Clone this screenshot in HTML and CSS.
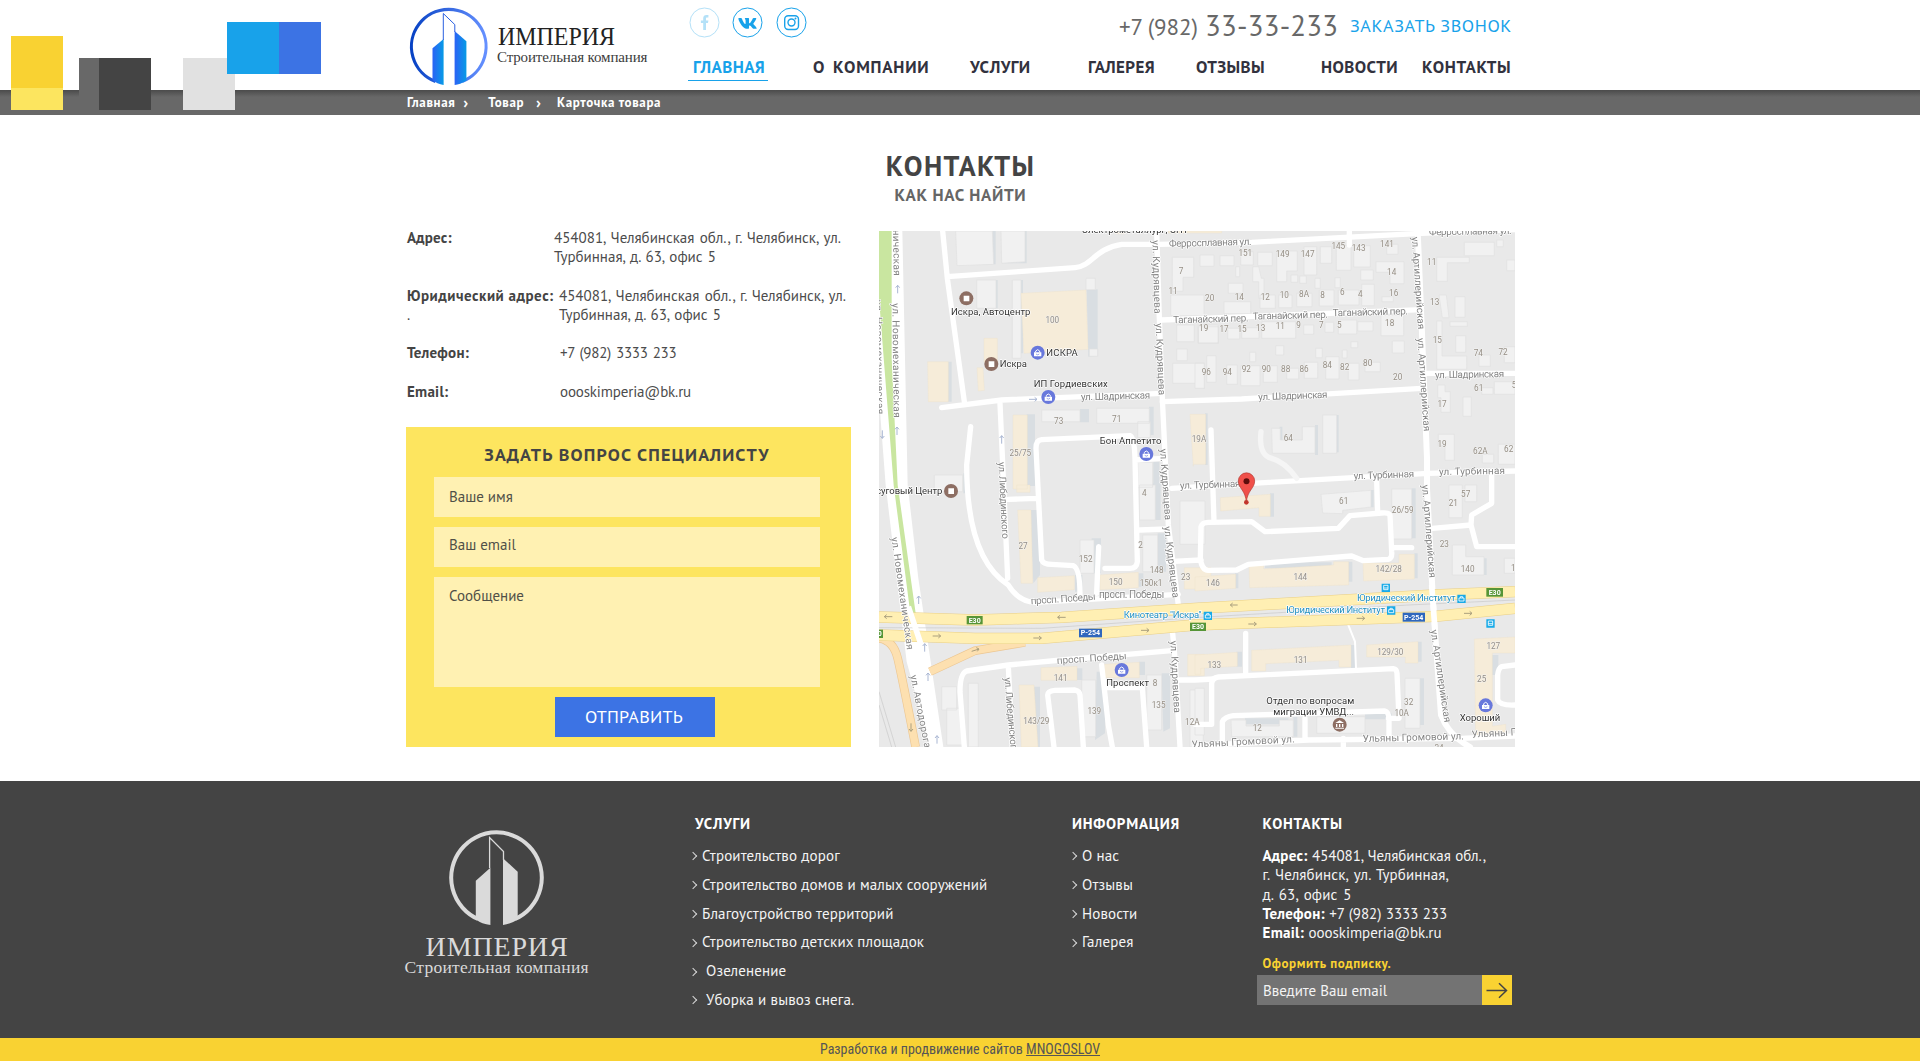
FILE: index.html
```html
<!DOCTYPE html>
<html lang="ru">
<head>
<meta charset="utf-8">
<title>Империя — Контакты</title>
<link rel="stylesheet" href="styles.css">
</head>
<body>
<div class="decor" aria-hidden="true">
  <i class="sq yellow"></i><i class="sq lemon"></i><i class="sq grey"></i><i class="sq dark"></i><i class="sq silver"></i><i class="sq sky"></i><i class="sq royal"></i>
</div>

<header class="header">
  <div class="wrap header-in">
    <a class="logo" href="#">
      <svg width="250" height="90" viewBox="407 0 250 90">
        <defs>
          <linearGradient id="ring"><stop offset="0" stop-color="#0742c4"/><stop offset="1" stop-color="#6590ff"/></linearGradient>
          <linearGradient id="tower"><stop offset="0" stop-color="#2b62f5"/><stop offset="1" stop-color="#069be6"/></linearGradient>
        </defs>
        <path d="M435.5 81.5A37.300 37.300 0 1 1 462 81.5" fill="none" stroke="url(#ring)" stroke-width="3.100"/>
        <path d="M432.5 48.300 443.600 39V85Q437 84 432.500 80Z" fill="url(#tower)"/>
        <path d="M454.600 31 466.400 41.300V80.500Q460 84.500 454.600 85Z" fill="url(#tower)"/>
        <path d="M443.300 40V13.500L454.800 24.600V32" fill="none" stroke="#2a5fe0"/>
        <text class="brand" x="498" y="44.500" font-size="25" textLength="117" lengthAdjust="spacingAndGlyphs" fill="#222">ИМПЕРИЯ</text>
        <text class="brand" x="497" y="62" font-size="15" textLength="150.500" fill="#3c3c3c">Строительная компания</text>
      </svg>
    </a>
    <div class="header-main">
      <div class="topline">
        <div class="social">
          <svg class="faded" width="31" height="31" viewBox="-15.500 -15.500 31 31"><circle r="14.500"/><path class="solid" d="M-1.300 7.500V.6H-3.600V-2H-1.300V-4.200C-1.300-6.500-.1-7.600 2-7.600H3.900V-5H2.600C1.700-5 1.500-4.600 1.500-3.800V-2H3.900L3.500.6H1.500V7.500Z"/></svg>
          <svg width="31" height="31" viewBox="-15.500 -15.500 31 31"><circle r="14.500"/><path class="solid" transform="translate(-9.800 -7.800) scale(.034)" d="M545 117.700c3.700-12.500 0-21.700-17.800-21.700h-58.900c-15 0-21.900 7.900-25.600 16.700 0 0-30 73.100-72.400 120.500-13.700 13.700-20 18.100-27.500 18.100-3.700 0-9.400-4.400-9.400-16.900V117.700c0-15-4.200-21.700-16.600-21.700h-92.600c-9.400 0-15 7-15 13.500 0 14.200 21.200 17.500 23.400 57.500v86.800c0 19-3.400 22.500-10.900 22.500-20 0-68.600-73.400-97.400-157.400-5.800-16.300-11.500-22.900-26.600-22.900H38.800c-16.800 0-20.200 7.900-20.200 16.700 0 15.600 20 93.100 93.100 195.500C160.400 378.100 229 416 291.400 416c37.500 0 42.100-8.400 42.100-22.900 0-66.800-3.400-73.100 15.400-73.100 8.700 0 23.700 4.400 58.700 38.100 40 40 46.600 57.900 69 57.900h58.900c16.800 0 25.300-8.400 20.400-25-11.200-34.900-86.900-106.700-90.300-111.500-8.700-11.200-6.200-16.200 0-26.200.1-.1 72-101.300 79.400-135.600z"/></svg>
          <svg width="31" height="31" viewBox="-15.500 -15.500 31 31"><circle r="14.500"/><rect x="-6.800" y="-6.800" width="13.800" height="13.800" rx="3.500"/><circle class="lens" r="3.500"/><circle class="solid" cx="4" cy="-4" r="1"/></svg>
        </div>
        <div class="phone"><span>+7 (982)</span><b>33-33-233</b></div>
        <a class="callback" href="#">ЗАКАЗАТЬ ЗВОНОК</a>
      </div>
      <nav class="nav">
        <a class="active" href="#">ГЛАВНАЯ</a><a class="wide" href="#">О КОМПАНИИ</a><a href="#">УСЛУГИ</a><a href="#">ГАЛЕРЕЯ</a><a href="#">ОТЗЫВЫ</a><a href="#">НОВОСТИ</a><a class="last" href="#">КОНТАКТЫ</a>
      </nav>
    </div>
  </div>
</header>

<div class="crumbs"><div class="wrap crumbs-in"><a>Главная</a><i>›</i><a>Товар</a><i class="second">›</i><a>Карточка товара</a></div></div>

<main class="wrap">
  <h1>КОНТАКТЫ</h1>
  <p class="subtitle">КАК НАС НАЙТИ</p>
  <div class="columns">
    <section class="left">
      <dl class="info">
        <div><dt>Адрес:</dt><dd class="near">454081, Челябинская обл., г. Челябинск, ул.<br>Турбинная, д. 63, офис 5</dd></div>
        <div><dt class="legal">Юридический адрес:<br><span>.</span></dt><dd>454081, Челябинская обл., г. Челябинск, ул.<br>Турбинная, д. 63, офис 5</dd></div>
        <div><dt>Телефон:</dt><dd class="far phone-no">+7 (982) 3333 233</dd></div>
        <div><dt>Email:</dt><dd class="far mail">oooskimperia@bk.ru</dd></div>
      </dl>
      <form class="ask">
        <h2>ЗАДАТЬ ВОПРОС СПЕЦИАЛИСТУ</h2>
        <div class="field">Ваше имя</div>
        <div class="field second">Ваш email</div>
        <div class="field area">Сообщение</div>
        <button type="button">ОТПРАВИТЬ</button>
      </form>
    </section>

    <svg class="map" width="636" height="516" viewBox="12 18 1908 1548">
      <rect x="12" y="18" width="1908" height="1548" fill="#e9e9e9"/>
      <!-- buildings -->
      <g class="shade">
        <path d="M352 18h10v100h-100v-6h90zM450 18h5v97h-70v-4h65zM360 165h8v85h-8zM438 165h6v220h-6zM635 195l33-2v200l-28 2zM218 410h12v120h-12zM455 568h25v215h-25zM615 552h27v40h-27zM822 545h14v85h-14zM265 745h8v60h-8zM465 855h30v195l-20 25zM600 1050h22v50h-22zM650 940h28v105h-28zM832 775h25v110h-25zM848 925h25v115h-25zM790 1045h15v40h-15zM470 1385h25v181h-25zM600 1330h22v35h-22zM665 1340h25v185l-30 20zM792 1310h18v40h-18zM860 1345h25v165l-20 10zM835 710h18v75h-18z"/>
        <path d="M990 565h8v155h-8zM1214 605h8v40h-8zM1320 600h9v90h-9zM1384 570h7v112h-7zM1185 805h12v70h-12zM1488 795h8v52h-8zM1610 790h12v150h-12zM1080 1045h10v45h-10zM1170 1012h200v18h-200zM1418 1010h14v60h-14zM1618 985h10v75h-10zM1085 1280h16v45h-16zM1428 1260h14v70h-14zM1628 1250h12v60h-12zM1635 1360h12v140h-12zM1255 1475h12v60h-12zM1110 1480h130v18h-130zM1470 1465h80v18h-80zM1825 1000h10v50h-10zM1850 1290h20v60h-20z"/>
      </g>
      <g class="house">
        <path d="M242 18h110l4 100-110 4zM378 18h72v92l-70 5zM305 165h58v85h-58zM412 165h26v235h-26zM633 160h28v34h-28zM643 372h25v22h-25zM500 555h115v35H500zM665 550h158v45H665zM788 590h38v48h-38zM178 750h85v50h-85zM615 945h42v100h-42zM793 780h48v105h-48zM803 930h45v110h-45zM788 712h45v75h-45zM915 828h75v130h-75zM200 1385h45v70h-45zM280 1375h30v191h-30zM215 1450h50v110h-50zM620 1365h42v170h-42zM815 1350h45v165h-45zM945 1395h40v171h-40z"/>
        <path d="M892 97h64v60h-32v42h-32zM975 90h42v34h-42zM887 210h100v62h-100zM905 300h53v50h-53zM905 372h32v35h-32zM893 415h95v75h-25v-15h-70zM970 300h60v54h-60zM1035 92h42v30h-42zM1097 80h38v40h-38zM1148 82h44v40h-44zM1205 78h62v60h-32v32h-30zM1287 65h38v85h-38zM1336 65h34v50h-34zM1384 62h44v74h-44zM1436 62h50v64h-50zM1535 58h34v30h-34zM1503 110h84v66h-42v-34h-42zM1060 175h44v30h-44zM1133 125h18l8 35h8v60h-16v-50h-18zM1047 230h80v36h-80zM1155 210h46v40h-46zM1211 210h40v38h-40zM1265 205h46v40h-46zM1333 195h44v48h-44zM1390 195h62v45h-62zM1460 178h38v64h-38zM1521 215h34v15h-34zM1457 135h38v30h-38zM1320 160h16v30h-16zM1380 158h16v30h-16zM1248 150h20v22h-20zM1274 153h20v22h-20zM1082 125h12v30h-12zM970 305h60v50h-60zM1058 310h36v32h-36zM1100 308h52v32h-52zM1160 290h102v50h-102zM1286 300h30v28h-30zM1350 292h26v30h-26zM1390 285h55v42h-55zM1448 290h46v28h-46zM1518 270h68v62h-68z"/>
        <path d="M995 392h28v80h-28zM960 415h28v75h-28zM1055 420h32v58h-32zM1097 422h58v60h-58zM1165 422h42v50h-42zM1235 430h36v32h-36zM1288 412h40v48h-40zM1352 395h40v67h-40zM1420 415h32v50h-32zM1470 412h46v28h-46zM1552 348h36v36h-36zM1124 382h18v28h-18zM1202 362h24v28h-24zM1322 370h20v28h-20zM1402 375h14v24h-14zM1428 350h20v18h-20zM1190 610h26v35h66v-40h38v80h-128zM1343 570h42v115h-42zM1685 97h98v16h-66v56h-32zM1768 52h90v40h-90zM1865 45h20v20h-20zM1895 105h25v32h-25zM1692 210h22l8 68h-20zM1740 215h30v62h-30zM1685 288h16v105h74v40h-90zM1742 332h30v50h-30zM1725 290h52v14h-52zM1812 390h34v34h-34zM1888 365h32v48h-32zM1858 470h62v38h-62zM1820 488h34v20h-34zM1688 480h22v20h16v62h-28v-44h-10zM1764 516h25v58h-25zM1690 628h48v78h-28v-44h-20zM1870 658h50v60h-50zM1822 688h34v26h-34z"/>
        <path d="M1338 808l150-12v50l-85 10v10l-60-2zM1550 792h60v150h-60zM1722 780h40v98h-40zM1770 780h35v50h-35zM1732 960h40v35h55v55h-95zM1888 1000h32v45h-32zM1590 1360h45v150h-45zM1068 1485h45v18h100v-18h42v50h-185zM1325 1475h145v50h-145zM960 1390h28v140h-28z"/>
      </g>
      <g class="cream">
        <path d="M438 205l195-10 6 178-192 12zM327 340h40v72h-40zM158 410h62v120h-60zM306 428h18l4 68-18 2zM414 570h43v222h-43zM945 568h47v150h-37v6zM428 855h40l5 220h-35zM488 1058l110-6v42l-110 8zM675 1050l115-8v46l-115 6zM928 1028h80v64h-80zM498 1328l108-4v42h-108zM432 1380h45l12 186h-50zM688 1318l105-6v46h-105zM938 1288h50v64h-50zM720 18h30v8h-30zM880 18h160v6h-160zM425 780h40v22h-40z"/>
        <path d="M1036 818l150-10v66h-34v-26l-115 10zM960 1056l122-8v42l-122 8zM1122 1018h44v14l210-12v-10h45v70l-297 8zM1464 1014h108v-26h46v74l-152 6zM960 1290l127-8v42l-110 6v18h-17zM1130 1276l298-16v66h-36v-20l-220 10v22h-42zM1475 1260l154-10v64h-38v-18h-116zM1798 1242l122-6v48h-68v220l40-6v36l-90 4z"/>
      </g>
      <!-- ring road with its green strip -->
      <path d="M12 520V250L48 18H82L98 780 130 1060 205 1566H165L95 1310 32 780Z" fill="#fff"/>
      <path d="M12 18H50V400L68 780 122 1165H106L56 780 34 500 12 220Z" fill="#c9e6a0"/>
      <path d="M12 1440 50 1566M12 1400 62 1566" class="rail"/>
      <!-- streets -->
      <g class="road">
        <path d="M203 18 217 160 268 530M217 155 600 128C650 124 660 70 740 58H850M850 58 1130 52 1640 25 1920 14"/>
        <path d="M845 18 853 280 862 520 880 900 910 1140M893 1225 900 1300 915 1566"/>
        <path d="M860 285 1640 254M200 548 380 525 862 505M862 530 1100 522 1640 490M1655 445 1920 445"/>
        <path d="M1628 18 1640 300 1656 700V790L1672 1090 1680 1220 1698 1470Q1720 1530 1785 1566" stroke-width="18"/>
        <path d="M890 790 1130 775 1660 745 1920 738M375 535 385 760 398 1060M287 605 275 720Q275 1000 400 1080 430 1130 480 1132L910 1108"/>
        <path d="M1423 60V18M1008 615 1017 890M1505 765 1508 865M1850 745V835L1790 870 1788 900 1805 965H1920M1672 910 1788 900M1555 968H1610M880 1010 978 1005"/>
        <path d="M483 670Q483 645 500 644L765 632Q778 635 780 700L787 1010Q785 1030 765 1030H690M483 670 500 1005Q505 1018 530 1018L595 1022Q615 1030 615 1110M400 823 485 820M780 705 865 700M795 915 875 912M671 965 665 1105"/>
        <path d="M978 905 976 1000Q980 1035 1000 1036L1085 1035 1120 1018 1430 993 1465 1007 1540 1003Q1552 1000 1550 980L1545 870Q1540 862 1520 864L1425 872 1390 910 1170 920 1130 890 1000 892Q982 892 978 905Z"/>
        <path d="M890 1277 560 1305 400 1320 275 1338Q255 1345 255 1400L268 1566M400 1325 412 1566M680 1320 700 1500 712 1566M537 1566 518 1410Q518 1398 540 1396L600 1395Q614 1398 615 1410L625 1566M700 1388H802L815 1566M905 1365H960M1112 1225V1350M960 1365 1015 1362"/>
        <path d="M960 1498H1010V1375Q1012 1358 1030 1356L1555 1331Q1565 1332 1566 1345L1572 1480H1540M1042 1545V1490Q1050 1475 1075 1472L1530 1458Q1540 1460 1542 1480V1540M1290 1480V1545M960 1562 1300 1545 1760 1540 1920 1533M1920 1320 1880 1325Q1870 1330 1868 1350V1425Q1875 1442 1920 1440M1405 1540V1566"/>
        <path d="M1418 1195 1440 1250 1443 1330" stroke-width="6"/>
        <path d="M1158 620Q1150 690 1190 700T1265 760" stroke="#f5f5f5"/>
      </g>
      <!-- motorway -->
      <g fill="none">
        <path d="M12 1240Q55 1245 68 1300T122 1566M165 1340 300 1277 450 1252" stroke="#ecc793" stroke-width="26"/>
        <path d="M12 1240Q55 1245 68 1300T122 1566M165 1340 300 1277 450 1252" stroke="#fde0b0" stroke-width="22"/>
        <path d="M12 1208 500 1210 960 1178 1600 1140 1920 1125" class="rail"/>
        <path d="M12 1176 300 1185 560 1177 960 1150 1680 1110 1920 1100M12 1230 300 1240 500 1240 960 1200 1680 1174 1920 1150" stroke="#e9cf87" stroke-width="34"/>
        <path d="M12 1176 300 1185 560 1177 960 1150 1680 1110 1920 1100M12 1230 300 1240 500 1240 960 1200 1680 1174 1920 1150" stroke="#ffefb3" stroke-width="31"/>
        <path d="M100 1145 152 1300M1670 1080 1680 1215" stroke="#fff" stroke-width="17"/>
      </g>
      <!-- direction arrows -->
      <g class="arrow">
        <path d="M52 1175H28l7-6m-7 6 7 6M572 1177H548l7-6m-7 6 7 6M1088 1140H1066l7-6m-7 6 7 6M173 1233h24l-7-6m7 6-7 6M475 1239h24l-7-6m7 6-7 6M798 1216h24l-7-6m7 6-7 6M1120 1197h24l-7-6m7 6-7 6M1445 1180h24l-7-6m7 6-7 6M1767 1165h24l-7-6m7 6-7 6M290 1279l22-7-8-4m8 4-5 7M108 1495v24l-6-7m6 7 6-7"/>
        <path class="blue" d="M68 205v-24l-6 7m6-7 6 7M66 630v-24l-6 7m6-7 6 7M22 616v24l-6-7m6 7 6-7M380 656v-24l-6 7m6-7 6 7M462 523h24l-7-6m7 6-7 6M131 1137v-24l-6 7m6-7 6 7M149 1280v-24l-6 7m6-7 6 7M159 1368v-24l-6 7m6-7 6 7M186 1556v-24l-6 7m6-7 6 7"/>
      </g>
      <!-- street names -->
      <g class="street">
        <text transform="translate(54 14) rotate(89)" textLength="138">ническая</text>
        <text transform="translate(52 235) rotate(89.300)" textLength="343">ул. Новомеханическая</text>
        <text transform="translate(0 225) rotate(89)" textLength="343">ул. Новомеханическая</text>
        <text transform="translate(49 938) rotate(82)" textLength="340">ул. Новомеханическая</text>
        <text transform="translate(106 1352) rotate(79)" textLength="222">ул. Автодорога</text>
        <text transform="translate(370 712) rotate(87)" textLength="230">ул. Либединского</text>
        <text transform="translate(388 1358) rotate(85)" textLength="230">ул. Либединского</text>
        <text transform="translate(832 46) rotate(88.300)" textLength="220">ул. Кудрявцева</text>
        <text transform="translate(842 295) rotate(87.600)" textLength="216">ул. Кудрявцева</text>
        <text transform="translate(855 672) rotate(86)" textLength="214">ул. Кудрявцева</text>
        <text transform="translate(867 905) rotate(83)" textLength="216">ул. Кудрявцева</text>
        <text transform="translate(886 1248) rotate(87)" textLength="216">ул. Кудрявцева</text>
        <text transform="translate(1610 36) rotate(86)" textLength="278">ул. Артиллерийская</text>
        <text transform="translate(1627 340) rotate(86)" textLength="280">ул. Артиллерийская</text>
        <text transform="translate(1641 780) rotate(85.500)" textLength="280">ул. Артиллерийская</text>
        <text transform="translate(1667 1216) rotate(81.500)" textLength="280">ул. Артиллерийская</text>
        <text transform="translate(882 66) rotate(-1.500)" textLength="248">Ферросплавная ул.</text>
        <text transform="translate(1662 31) rotate(-1)" textLength="248">Ферросплавная ул.</text>
        <text transform="translate(895 295) rotate(-1.500)" textLength="226">Таганайский пер.</text>
        <text transform="translate(1133 284) rotate(-1.500)" textLength="226">Таганайский пер.</text>
        <text transform="translate(1373 274) rotate(-1.500)" textLength="226">Таганайский пер.</text>
        <text transform="translate(618 526) rotate(-1.500)" textLength="208">ул. Шадринская</text>
        <text transform="translate(1150 526) rotate(-2)" textLength="208">ул. Шадринская</text>
        <text transform="translate(1680 460) rotate(-1)" textLength="208">ул. Шадринская</text>
        <text transform="translate(915 792) rotate(-2)" textLength="182">ул. Турбинная</text>
        <text transform="translate(1436 763) rotate(-2)" textLength="182">ул. Турбинная</text>
        <text transform="translate(1692 750) rotate(-1)" textLength="198">ул. Турбинная</text>
        <text transform="translate(468 1138) rotate(-4)" textLength="195">просп. Победы</text>
        <text transform="translate(672 1120)" textLength="196">просп. Победы</text>
        <text transform="translate(546 1317) rotate(-4)" textLength="210">просп. Победы</text>
        <text transform="translate(950 1568) rotate(-3)" textLength="310">Ульяны Громовой ул.</text>
        <text transform="translate(1463 1551) rotate(-1.500)" textLength="304">Ульяны Громовой ул.</text>
        <text transform="translate(1790 1538) rotate(-3)" textLength="304">Ульяны Громовой ул.</text>
      </g>
      <!-- house numbers -->
      <g class="num">
        <text x="532" y="293">100</text><text x="551" y="598">73</text><text x="725" y="592">71</text><text x="436" y="692">25/75</text><text x="918" y="146">7</text><text x="894" y="206">11</text><text x="972" y="652">19А</text>
        <text x="1111" y="93">151</text><text x="1223" y="97">149</text><text x="1298" y="95">147</text><text x="1390" y="73">145</text><text x="1451" y="77">143</text><text x="1536" y="67">141</text><text x="1550" y="149">14</text><text x="1556" y="214">16</text><text x="1004" y="229">20</text><text x="1093" y="226">14</text><text x="1171" y="226">12</text><text x="1228" y="220">10</text><text x="1287" y="216">8А</text><text x="1343" y="220">8</text><text x="1402" y="210">6</text><text x="1456" y="217">4</text><text x="986" y="319">19</text><text x="1047" y="321">17</text><text x="1101" y="321">15</text><text x="1157" y="317">13</text><text x="1216" y="312">11</text><text x="1271" y="308">9</text><text x="1339" y="308">7</text><text x="1393" y="308">5</text><text x="1544" y="303">18</text>
        <text x="994" y="450">96</text><text x="1057" y="450">94</text><text x="1114" y="441">92</text><text x="1174" y="441">90</text><text x="1232" y="442">88</text><text x="1287" y="441">86</text><text x="1357" y="430">84</text><text x="1409" y="434">82</text><text x="1478" y="424">80</text><text x="1568" y="464">20</text><text x="1670" y="121">11</text><text x="1679" y="240">13</text><text x="1687" y="353">15</text><text x="1810" y="394">74</text><text x="1884" y="390">72</text><text x="1811" y="498">61</text><text x="1917" y="488">5</text><text x="1701" y="547">17</text><text x="1240" y="648">64</text><text x="1701" y="666">19</text><text x="1816" y="687">62А</text><text x="1901" y="680">62</text>
        <text x="808" y="812">4</text><text x="444" y="973">27</text><text x="632" y="1010">152</text><text x="797" y="968">2</text><text x="845" y="1044">148</text><text x="722" y="1080">150</text><text x="828" y="1084">150к1</text><text x="932" y="1066">23</text><text x="557" y="1368">141</text><text x="840" y="1382">8</text><text x="851" y="1449">135</text><text x="658" y="1467">139</text><text x="484" y="1497">143/29</text><text x="952" y="1501">12А</text>
        <text x="1406" y="836">61</text><text x="1583" y="863">26/59</text><text x="1772" y="817">57</text><text x="1735" y="842">21</text><text x="1708" y="966">23</text><text x="1778" y="1041">140</text><text x="1915" y="1039">1</text><text x="1541" y="1041">142/28</text><text x="1276" y="1065">144</text><text x="1014" y="1084">146</text><text x="1018" y="1328">133</text><text x="1277" y="1315">131</text><text x="1546" y="1291">129/30</text><text x="1855" y="1271">127</text><text x="1820" y="1370">25</text><text x="1601" y="1441">32</text><text x="1580" y="1474">10А</text><text x="1147" y="1519">12</text><text x="1692" y="1578">24</text>
      </g>
      <!-- route shields -->
      <g class="shield">
        <rect x="275" y="1173" width="48" height="25" fill="#569537"/><text x="299" y="1193">E30</text>
        <rect x="945" y="1193" width="48" height="25" fill="#569537"/><text x="969" y="1213">E30</text>
        <rect x="1834" y="1089" width="50" height="26" fill="#569537"/><text x="1859" y="1110">E30</text>
        <rect x="-20" y="1214" width="44" height="25" fill="#569537"/><text x="2" y="1234">E30</text>
        <rect x="612" y="1211" width="69" height="26" fill="#2f67bd"/><text x="646" y="1231">P-254</text>
        <rect x="1583" y="1163" width="67" height="27" fill="#2f67bd"/><text x="1616" y="1184">P-254</text>
      </g>
      <!-- transit -->
      <g class="transit">
        <text x="746" y="1179" textLength="234">Кинотеатр "Искра"</text>
        <text x="1446" y="1129" textLength="296">Юридический Институт</text>
        <text x="1234" y="1165" textLength="296">Юридический Институт</text>
        <path class="stop" d="M986 1160h25v25h-25zM1747 1109h25v25h-25zM1536 1144h25v25h-25zM1520 1076h25v25h-25zM1834 1183h25v25h-25z"/>
        <path class="glyph" d="M991 1170h15v9h-15zM995 1170v-4h7v4M1752 1119h15v9h-15zM1756 1119v-4h7v4M1541 1154h15v9h-15zM1545 1154v-4h7v4M1526 1081h13v13h-13zM1526 1089h13M1840 1188h13v13h-13zM1840 1196h13"/>
      </g>
      <!-- places -->
      <g class="poi">
        <text x="620" y="24" textLength="320">Электрометаллург, СПТ</text>
        <text x="228" y="269" textLength="238">Искра, Автоцентр</text>
        <text x="514" y="392" textLength="94">ИСКРА</text>
        <text x="374" y="426" textLength="82">Искра</text>
        <text x="476" y="486" textLength="222">ИП Гордиевских</text>
        <text x="674" y="657" textLength="185">Бон Аппетито</text>
        <text x="-34" y="806" textLength="236">Досуговый Центр</text>
        <text x="694" y="1384" textLength="128">Проспект</text>
        <text x="1174" y="1437" textLength="264">Отдел по вопросам</text>
        <text x="1195" y="1469" textLength="242">миграции УМВД...</text>
        <text x="1754" y="1488" textLength="122">Хороший</text>
      </g>
      <g fill="#8d6e63">
        <circle cx="274" cy="220" r="21"/><circle cx="349" cy="417" r="21"/><circle cx="228" cy="798" r="21"/><circle cx="1394" cy="1499" r="21"/>
        <path fill="#fff" d="M266 212h17v17h-17zM341 409h17v17h-17zM220 790h17v17h-17zM1394 1486l13 8h-26zM1383 1497h4v9h-4zM1392 1497h4v9h-4zM1401 1497h4v9h-4zM1381 1508h26v3h-26z"/>
      </g>
      <g fill="#6878dc">
        <circle cx="488" cy="383" r="21"/><circle cx="520" cy="516" r="21"/><circle cx="814" cy="687" r="21"/><circle cx="740" cy="1335" r="21"/><circle cx="1832" cy="1441" r="21"/>
        <path fill="#fff" d="M477 382h22v12h-22zM509 515h22v12h-22zM803 686h22v12h-22zM729 1334h22v12h-22zM1821 1440h22v12h-22z"/>
        <path fill="none" stroke="#fff" stroke-width="3" d="M482 382v-4q6-8 12 0v4M514 515v-4q6-8 12 0v4M808 686v-4q6-8 12 0v4M734 1334v-4q6-8 12 0v4M1826 1440v-4q6-8 12 0v4"/>
        <path fill="none" stroke="#6878dc" stroke-width="2" d="M483 387q5 5 10 0M515 520q5 5 10 0M809 691q5 5 10 0M735 1339q5 5 10 0M1827 1445q5 5 10 0"/>
      </g>
      <circle cx="1114" cy="832" r="7" fill="#c5352c"/>
      <path d="M1114 832C1112 796 1090 790 1090 768A24.500 24.500 0 0 1 1139 768C1139 790 1117 796 1114 832Z" fill="#f0504a" stroke="#b23a32" stroke-width="2"/>
      <circle cx="1114.500" cy="769" r="9" fill="#5c0d0b"/>
    </svg>
  </div>
</main>

<footer class="footer">
  <div class="wrap footer-in">
    <a class="logo-foot" href="#">
      <svg width="190" height="150" viewBox="404 828 190 150">
        <path d="M478 919A45.300 45.300 0 1 1 515 919" fill="none" stroke="#dadada" stroke-width="4"/>
        <path fill="#dadada" d="M475.800 880.700 490.400 867.700V925Q482 924 475.800 919.500ZM503 858.300 517.700 871.700V919.500Q511 924 503 925Z"/>
        <path d="M489.600 868V837.500L503.500 851.500V860" fill="none" stroke="#dadada" stroke-width="1.300"/>
        <text class="brand" x="425.600" y="955.700" font-size="28" textLength="142">ИМПЕРИЯ</text>
        <text class="brand" x="404.600" y="972.500" font-size="17.500" textLength="184">Строительная компания</text>
      </svg>
    </a>
    <section class="services">
      <h3 class="shift">УСЛУГИ</h3>
      <ul>
        <li>Строительство дорог</li><li>Строительство домов и малых сооружений</li><li>Благоустройство территорий</li><li>Строительство детских площадок</li><li class="pad">Озеленение</li><li class="pad">Уборка и вывоз снега.</li>
      </ul>
    </section>
    <section class="about">
      <h3>ИНФОРМАЦИЯ</h3>
      <ul><li>О нас</li><li>Отзывы</li><li>Новости</li><li>Галерея</li></ul>
    </section>
    <section class="contacts">
      <h3>КОНТАКТЫ</h3>
      <address><b>Адрес:</b> 454081, Челябинская обл.,<br><span>г. Челябинск, ул. Турбинная,<br>д. 63, офис 5</span><br><b>Телефон:</b> +7 (982) 3333 233<br><b>Email:</b> oooskimperia@bk.ru</address>
      <p>Оформить подписку.</p>
      <div class="subscribe"><span>Введите Ваш email</span><button type="button" aria-label="Подписаться"><svg width="22" height="17" viewBox="0 0 22 17"><path d="M.5 8.500H20.500M13 1.300 20.500 8.500 13 15.700" fill="none" stroke="#444" stroke-width="1.500"/></svg></button></div>
    </section>
  </div>
</footer>
<div class="credit">Разработка и продвижение сайтов&nbsp;<a>MNOGOSLOV</a></div>
</body>
</html>
```
FILE: styles.css
```css
* { box-sizing: border-box; }
body { margin: 0; width: 1920px; position: relative; background: #fff; color: #4c4c4c; font: 15px/19px "PT Sans", Lato, sans-serif; overflow: hidden; }
h1, h2, h3, p, ul, dl, dd { margin: 0; padding: 0; }
h1, h2, dt { color: #444; }
svg { display: block; }
a { color: inherit; text-decoration: none; }
.wrap { width: 1106px; margin: 0 auto; }
.brand { font-family: "Liberation Serif", serif; }

/* coloured squares lying over the header */
.sq { position: absolute; z-index: 2; width: 52px; height: 52px; }
.yellow { left: 11px; top: 36px; background: #f9d232; }
.lemon { left: 11px; top: 88px; height: 22px; background: #fce55f; }
.grey { left: 79px; top: 58px; width: 20px; background: #686868; }
.dark { left: 99px; top: 58px; background: #444; }
.silver { left: 183px; top: 58px; background: #e1e1e1; }
.sky { left: 227px; top: 22px; background: #18a2ea; }
.royal { left: 279px; top: 22px; width: 42px; background: #3c73e4; }

.header { height: 90px; }
.header-in { display: flex; }
.header-main { margin-left: 31px; width: 824px; }
.topline { display: flex; height: 57px; padding: 7px 0 0 1px; color: #686868; }
.social { display: flex; gap: 12px; width: 430px; height: 31px; }
.social svg { fill: none; stroke: #18a2ea; stroke-width: 1; }
.social svg:last-child { margin-left: 1px; }
.social rect, .social .lens { stroke-width: 1.400; }
.social .solid { fill: #18a2ea; stroke: none; }
.social .faded { stroke: #b4e1f8; }
.social .faded .solid { fill: #b4e1f8; }
.phone { display: flex; width: 231px; line-height: 37px; font-size: 23px; letter-spacing: -.1px; }
.phone span { width: 86px; padding-top: 1px; }
.phone b { font-weight: 400; font-size: 29px; letter-spacing: .2px; }
.callback { color: #18a2ea; font-size: 18px; line-height: 37px; letter-spacing: .6px; white-space: nowrap; }
.nav { display: grid; grid-template-columns: 125px 157px 118px 108px 125px 101px auto; font-weight: 700; font-size: 17px; line-height: 20px; color: #32323e; letter-spacing: .4px; white-space: nowrap; }
.nav .wide { letter-spacing: .8px; word-spacing: 3px; }
.nav .last { letter-spacing: .65px; }
.nav .active { width: 80px; padding: 0 0 3px 5px; border-bottom: 1px solid #18a2ea; color: #18a2ea; }

.crumbs { height: 25px; background: linear-gradient(#4b4b4b, #686868 7px); color: #fff; font-weight: 700; font-size: 13px; line-height: 26px; letter-spacing: .6px; }
.crumbs-in { display: flex; }
.crumbs i { font-style: normal; font-size: 16px; line-height: 24px; width: 25px; margin-left: 8px; }
.crumbs i.second { width: 21px; margin-left: 12px; }

h1 { margin-top: 35px; text-align: center; font-size: 28px; line-height: 32px; letter-spacing: 1.400px; text-indent: 1px; }
.subtitle { margin-top: 3px; text-align: center; font-weight: 700; font-size: 17px; line-height: 20px; letter-spacing: .7px; text-indent: 1px; color: #666; }
.columns { display: flex; align-items: flex-start; }
.left { width: 472px; padding-top: 23px; }
.map { flex: none; margin-top: 26px; margin-right: -4px; filter: blur(.2px); }

.info { height: 199px; display: flex; flex-direction: column; gap: 19.500px; }
.info div { display: flex; white-space: nowrap; }
.info dt { width: 152px; font-weight: 700; letter-spacing: .25px; }
.info dt.legal { letter-spacing: .5px; }
.info dt span { font-weight: 400; }
.info dd { word-spacing: 1.300px; }
.info dd.near { margin-left: -5px; }
.info dd.far { margin-left: 1px; }
.info .phone-no { letter-spacing: -.27px; }
.info .mail { letter-spacing: -.15px; }

.ask { width: 445px; height: 320px; margin-left: -1px; padding: 16px 31px 10px 28px; background: #fde55f; }
.ask h2 { height: 34px; text-align: center; font-size: 18px; line-height: 23px; letter-spacing: 1.180px; }
.field { height: 40px; margin-bottom: 10px; padding-left: 15px; background: #fff1b2; line-height: 40px; color: #505048; }
.field.second { line-height: 35px; }
.field.area { height: 110px; line-height: 37px; }
.ask button { display: block; width: 160px; height: 40px; margin: 0 0 0 121px; padding: 0; border: 0; background: #3c73e4; color: #fff; font: 18px/40px "PT Sans", Lato, sans-serif; letter-spacing: .28px; text-indent: -2px; }

.shade { fill: #d9dee2; }
.house { fill: #f1f1f1; stroke: #e1e1e1; stroke-width: 2; }
.cream { fill: #f6ecd9; stroke: #eee0c8; stroke-width: 1; }
.road { fill: none; stroke: #fff; stroke-width: 16; stroke-linejoin: round; stroke-linecap: round; }
.rail { fill: none; stroke: #c9c9c9; stroke-width: 2; }
.arrow { fill: none; stroke: #aa9f7e; stroke-width: 3; }
.arrow .blue { stroke: #aab7d3; }
.map text { font-family: Roboto, sans-serif; paint-order: stroke; stroke-linejoin: round; }
.street text { font-size: 30px; fill: #858585; stroke: #fff; stroke-width: 4; }
.num text { font-size: 24.500px; fill: #958e84; stroke: #f2f2f2; stroke-width: 3; text-anchor: middle; }
.poi text { font-size: 28.500px; fill: #333; stroke: #fff; stroke-width: 4; }
.transit text { font-size: 28.500px; fill: #218fc0; stroke: #fff; stroke-width: 4; }
.map .shield text { font-size: 21px; font-weight: 700; fill: #fff; text-anchor: middle; }
.stop { fill: #18aae8; }
.glyph { fill: none; stroke: #fff; stroke-width: 2.500; }

.footer { height: 257px; margin-top: 34px; padding-top: 33px; background: #444; color: #f4f4f4; }
.footer-in { display: flex; white-space: nowrap; }
.logo-foot { width: 285px; margin-left: -3px; padding-top: 14px; }
.logo-foot text { fill: #dadada; }
.footer h3 { height: 28px; font-size: 15px; line-height: 20px; letter-spacing: .75px; color: #fff; }
.footer h3.shift { padding-left: 3px; }
.footer ul { list-style: none; line-height: 28.800px; letter-spacing: .14px; }
.footer li { display: flex; align-items: center; }
.footer li::before { content: ""; width: 5px; height: 5px; margin: 0 6px 0 -2px; border: solid #d8d8d8; border-width: 1px 1px 0 0; transform: rotate(45deg); }
.footer li.pad::before { margin-right: 10px; }
.services { width: 383px; padding-left: 3px; }
.about { width: 185px; }
.contacts h3, .contacts address, .contacts p { padding-left: 5.500px; }
.contacts address { font-style: normal; margin-top: 4px; line-height: 19.250px; letter-spacing: -.05px; word-spacing: .5px; }
.contacts address span { letter-spacing: .12px; word-spacing: 1.800px; }
.contacts address b { letter-spacing: .3px; color: #fff; }
.contacts p { margin-top: 12px; font-weight: 700; font-size: 13px; line-height: 19px; letter-spacing: .6px; color: #f9d232; }
.subscribe { display: flex; width: 255px; height: 30px; margin-top: 2px; background: #737373; }
.subscribe span { flex: 1; padding-left: 6px; line-height: 31px; }
.subscribe button { width: 30px; padding: 0 0 0 4px; border: 0; background: #f9d232; }
.credit { height: 23px; background: #f9d232; text-align: center; font: 14px/22px "Roboto Condensed", Roboto, sans-serif; color: #555; }
.credit a { text-decoration: underline; }
```
